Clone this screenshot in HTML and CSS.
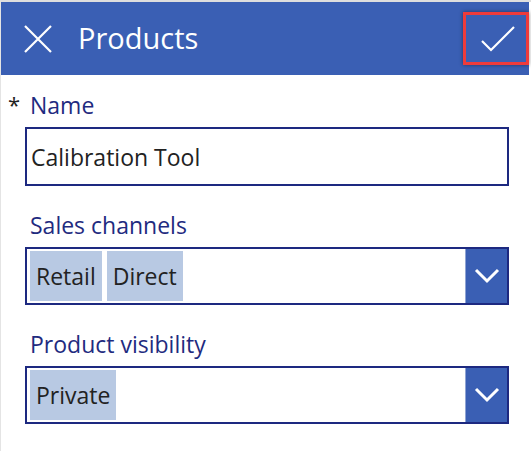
FILE: index.html
```html
<!DOCTYPE html>
<html lang="en">
<head>
<meta charset="utf-8">
<title>Products</title>
<link rel="stylesheet" href="styles.css">
</head>
<body>
<div class="app">
  <header class="topbar">
    <button class="icon-btn close" aria-label="Close">
      <svg width="28" height="28" viewBox="0 0 28 28"><path d="M1 1 L27 27 M27 1 L1 27" stroke="#fff" stroke-width="2.2" fill="none"/></svg>
    </button>
    <h1 class="title">Products</h1>
    <button class="icon-btn save" aria-label="Save">
      <svg width="36" height="28" viewBox="0 0 36 28"><path d="M2 16 L11 25 L34 2" stroke="#fff" stroke-width="2.2" fill="none"/></svg>
    </button>
  </header>
  <form class="form">
    <div class="field">
      <label class="label"><span class="req">*</span>Name</label>
      <div class="box text-box">Calibration Tool</div>
    </div>
    <div class="field">
      <label class="label">Sales channels</label>
      <div class="box combo">
        <div class="tags">
          <span class="tag">Retail</span>
          <span class="tag">Direct</span>
        </div>
        <span class="chev">
          <svg width="26" height="16" viewBox="0 0 26 16"><path d="M2 2 L13 13 L24 2" stroke="#fff" stroke-width="3" fill="none"/></svg>
        </span>
      </div>
    </div>
    <div class="field">
      <label class="label">Product visibility</label>
      <div class="box combo">
        <div class="tags">
          <span class="tag">Private</span>
        </div>
        <span class="chev">
          <svg width="26" height="16" viewBox="0 0 26 16"><path d="M2 2 L13 13 L24 2" stroke="#fff" stroke-width="3" fill="none"/></svg>
        </span>
      </div>
    </div>
  </form>
</div>
</body>
</html>
```

FILE: styles.css
```css
* { box-sizing: border-box; }
html, body { margin: 0; padding: 0; background: #fff; }
body { font-family: "Open Sans", "Noto Sans", sans-serif; }
.app {
  width: 531px;
  height: 451px;
  border-top: 2px solid #dedede;
  border-left: 1px solid #e4e4e4;
}
.topbar {
  height: 73px;
  margin-right: 2px;
  background: #3a5fb4;
  display: flex;
  align-items: center;
}
.icon-btn {
  background: none;
  border: none;
  padding: 0;
  display: flex;
  align-items: center;
  justify-content: center;
}
.close { margin-left: 22px; width: 30px; height: 30px; }
.title {
  margin: 0 0 0 25px;
  font-weight: 400;
  font-size: 29px;
  color: #fff;
  flex: 1;
  line-height: 40px;
  padding-bottom: 2px;
}
.save {
  width: 66px;
  height: 53px;
  border: 3px solid #ee3b3b;
  box-shadow: 0 0 4px rgba(0,0,0,0.45);
  margin-bottom: 0;
}
.save svg { margin-left: 4px; }
.form {
  padding: 15px 0 0 24px;
  width: 508px;
}
.field { margin-bottom: 24px; }
.label {
  display: block;
  position: relative;
  padding-left: 5px;
  font-size: 23px;
  line-height: 31px;
  color: #1f2b80;
  margin-bottom: 6px;
}
.req {
  position: absolute;
  left: -17px;
  top: -1px;
  color: #222;
  font-size: 22px;
}
.box {
  border: 2px solid #1d2980;
  height: 59px;
  display: flex;
  align-items: center;
}
.text-box {
  padding-left: 4px;
  font-size: 23px;
  color: #222;
}
.combo { align-items: stretch; height: 58px; }
.tags {
  flex: 1;
  display: flex;
  gap: 5px;
  padding: 2px 3px;
}
.tag {
  background: #b8c9e3;
  color: #222;
  font-size: 23px;
  padding: 0 6px;
  display: flex;
  align-items: center;
  height: 50px;
}
.chev {
  width: 42px;
  background: #3a5fb4;
  border-left: 1px solid #8fa4d4;
  display: flex;
  align-items: center;
  justify-content: center;
}
```
